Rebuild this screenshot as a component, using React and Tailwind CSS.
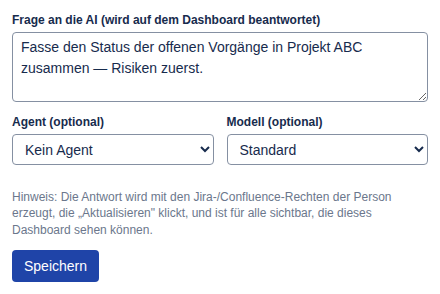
import React, { useState } from "react";

const font = { fontFamily: '"Liberation Sans", Arial, sans-serif' };

export default function App() {
  const [question, setQuestion] = useState(
    "Fasse den Status der offenen Vorgänge in Projekt ABC zusammen — Risiken zuerst."
  );
  const [agent, setAgent] = useState("none");
  const [model, setModel] = useState("default");

  return (
    <div className="bg-white px-3 pt-3 text-[#172b4d] font-['Liberation_Sans',Arial,sans-serif]" style={font}>
      {/* Question */}
      <label className="block text-xs font-bold leading-4 mb-1">
        Frage an die AI (wird auf dem Dashboard beantwortet)
      </label>
      <textarea
        value={question}
        onChange={(e) => setQuestion(e.target.value)}
        className="block w-full h-[70px] rounded border border-[#8590a2] bg-white px-2 py-1 text-sm leading-[1.5] text-[#172b4d] outline-none"
      />

      {/* Agent + model */}
      <div className="mt-3 grid grid-cols-2 gap-[13px]">
        <div>
          <label className="block text-xs font-bold leading-4 mb-1">Agent (optional)</label>
          <select
            value={agent}
            onChange={(e) => setAgent(e.target.value)}
            className="block w-full h-[31px] rounded border border-[#8590a2] bg-white pl-2 pr-1 text-sm text-[#172b4d] outline-none"
          >
            <option value="none">Kein Agent</option>
          </select>
        </div>
        <div>
          <label className="block text-xs font-bold leading-4 mb-1">Modell (optional)</label>
          <select
            value={model}
            onChange={(e) => setModel(e.target.value)}
            className="block w-full h-[31px] rounded border border-[#8590a2] bg-white pl-2 pr-1 text-sm text-[#172b4d] outline-none"
          >
            <option value="default">Standard</option>
          </select>
        </div>
      </div>

      {/* Hint */}
      <p className="mt-6 text-xs leading-[16.4px] text-[#6b778c] pr-8">
        Hinweis: Die Antwort wird mit den Jira-/Confluence-Rechten der Person erzeugt, die
        „Aktualisieren" klickt, und ist für alle sichtbar, die dieses Dashboard sehen können.
      </p>

      <button className="mt-3 rounded bg-[#1f44a8] px-3 py-1.5 text-sm leading-5 text-white">
        Speichern
      </button>
    </div>
  );
}
